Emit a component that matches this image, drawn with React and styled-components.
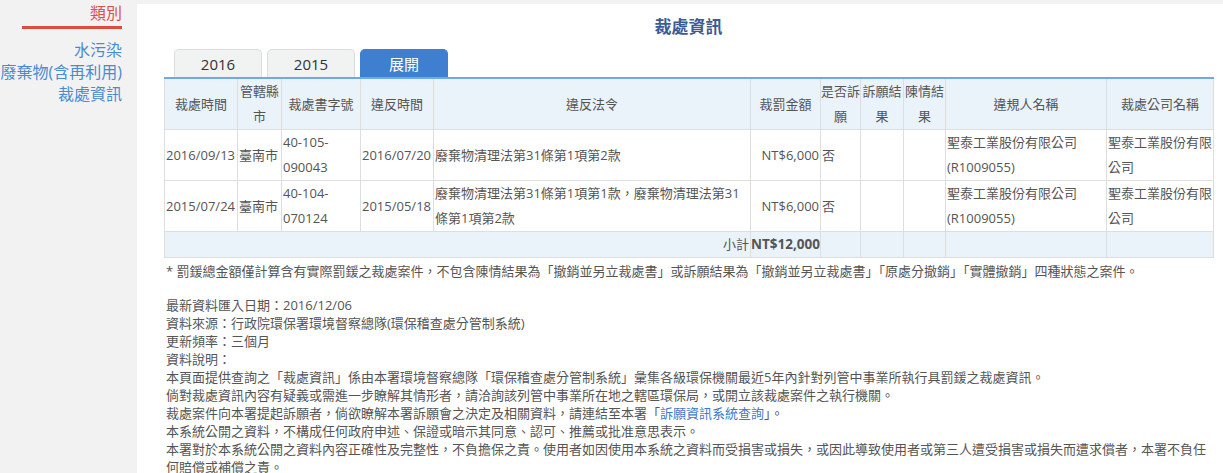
import React from "react";
import styled, { createGlobalStyle } from "styled-components";

const GlobalStyle = createGlobalStyle`
  html, body {
    margin: 0;
    padding: 0;
    background: #f2f2f2;
    font-family: "Open Sans", "Noto Sans CJK TC", sans-serif;
    color: #555;
  }
  * { box-sizing: border-box; }
`;

const Page = styled.div`
  display: flex;
  align-items: flex-start;
  width: 1223px;
  min-height: 473px;
  overflow: hidden;
`;

const Sidebar = styled.aside`
  flex: 0 0 137px;
  padding: 3px 15px 0 0;
  display: flex;
  flex-direction: column;
  align-items: flex-end;
  font-size: 16px;
`;

const SideHeading = styled.div`
  color: #de5147;
  line-height: 20px;
  white-space: nowrap;
`;

const SideBar = styled.div`
  width: 100px;
  height: 3px;
  margin-top: 3px;
  background: #e0493d;
`;

const SideList = styled.ul`
  list-style: none;
  margin: 10px 0 0;
  padding: 0;
  display: flex;
  flex-direction: column;
  align-items: flex-end;
`;

const SideItem = styled.li`
  color: #4a8ad4;
  line-height: 22px;
  white-space: nowrap;
`;

const Main = styled.main`
  flex: 1;
  margin-top: 4px;
  min-height: 469px;
  background: #fff;
  padding: 8px 10px 0 27px;
`;

const Title = styled.h1`
  margin: 0;
  width: 1049px;
  text-align: center;
  font-size: 17px;
  line-height: 30px;
  font-weight: bold;
  color: #3d5b95;
`;

const Tabs = styled.div`
  display: flex;
  gap: 5px;
  margin: 7px 0 0 10px;
`;

const Tab = styled.div`
  width: 88px;
  height: 28px;
  line-height: 29px;
  text-align: center;
  font-size: 15px;
  border: 1px solid ${(p) => (p.$active ? "#3f7fd0" : "#dcdcdc")};
  border-bottom: none;
  border-radius: 5px 5px 0 0;
  background: ${(p) => (p.$active ? "#3f7fd0" : "#f1f2f2")};
  color: ${(p) => (p.$active ? "#fff" : "#333")};
`;

const Table = styled.table`
  width: 1049px;
  table-layout: fixed;
  border-collapse: collapse;
  border-top: 2px solid #6ea9ec;
  font-size: 13px;
  line-height: 25px;
  color: #555;
`;

const HeadCell = styled.th`
  font-weight: normal;
  background: #eaf2fa;
  border: 1px solid #dedede;
  border-top: none;
  padding: 0;
  height: 50px;
  text-align: center;
  vertical-align: middle;
`;

const Cell = styled.td`
  border: 1px solid #dedede;
  padding: 0 1px;
  height: 51px;
  vertical-align: middle;
  text-align: ${(p) => (p.$right ? "right" : "left")};
  white-space: ${(p) => (p.$nowrap ? "nowrap" : "normal")};
`;

const TotalCell = styled.td`
  border: 1px solid #dedede;
  background: #eaf2fa;
  padding: 0 ${(p) => (p.$bold ? "0" : "1px")};
  height: 24px;
  text-align: right;
  font-size: ${(p) => (p.$bold ? "13.5px" : "13px")};
  font-weight: ${(p) => (p.$bold ? "bold" : "normal")};
  white-space: nowrap;
`;

const Notes = styled.div`
  width: 1045px;
  padding-left: 2px;
  font-size: 13px;
  line-height: 18px;
  color: #555;
`;

const Footnote = styled.p`
  margin: 4px 0 0;
`;

const InfoBlock = styled.div`
  margin-top: 16px;
`;

const Line = styled.div``;

const Link = styled.span`
  color: #3f7bc8;
`;

const columns = [73, 44, 79, 73, 317, 70, 40, 43, 42, 161, 107];

const headers = [
  "裁處時間",
  "管轄縣市",
  "裁處書字號",
  "違反時間",
  "違反法令",
  "裁罰金額",
  "是否訴願",
  "訴願結果",
  "陳情結果",
  "違規人名稱",
  "裁處公司名稱",
];

const records = [
  {
    date: "2016/09/13",
    city: "臺南市",
    doc: "40-105-090043",
    violated: "2016/07/20",
    law: "廢棄物清理法第31條第1項第2款",
    amount: "NT$6,000",
    appeal: "否",
    person: "聖泰工業股份有限公司(R1009055)",
    company: "聖泰工業股份有限公司",
  },
  {
    date: "2015/07/24",
    city: "臺南市",
    doc: "40-104-070124",
    violated: "2015/05/18",
    law: "廢棄物清理法第31條第1項第1款，廢棄物清理法第31條第1項第2款",
    amount: "NT$6,000",
    appeal: "否",
    person: "聖泰工業股份有限公司(R1009055)",
    company: "聖泰工業股份有限公司",
  },
];

export default function App() {
  return (
    <>
      <GlobalStyle />
      <Page>
        <Sidebar>
          <SideHeading>類別</SideHeading>
          <SideBar />
          <SideList>
            <SideItem>水污染</SideItem>
            <SideItem>廢棄物(含再利用)</SideItem>
            <SideItem>裁處資訊</SideItem>
          </SideList>
        </Sidebar>
        <Main>
          <Title>裁處資訊</Title>
          <Tabs>
            <Tab>2016</Tab>
            <Tab>2015</Tab>
            <Tab $active>展開</Tab>
          </Tabs>
          <Table>
            <colgroup>
              {columns.map((w, i) => (
                <col key={i} style={{ width: w }} />
              ))}
            </colgroup>
            <thead>
              <tr>
                {headers.map((h) => (
                  <HeadCell key={h}>{h}</HeadCell>
                ))}
              </tr>
            </thead>
            <tbody>
              {records.map((r) => (
                <tr key={r.doc}>
                  <Cell $nowrap>{r.date}</Cell>
                  <Cell>{r.city}</Cell>
                  <Cell>{r.doc}</Cell>
                  <Cell $nowrap>{r.violated}</Cell>
                  <Cell>{r.law}</Cell>
                  <Cell $right $nowrap>{r.amount}</Cell>
                  <Cell>{r.appeal}</Cell>
                  <Cell />
                  <Cell />
                  <Cell>{r.person}</Cell>
                  <Cell>{r.company}</Cell>
                </tr>
              ))}
              <tr>
                <TotalCell colSpan={5}>小計</TotalCell>
                <TotalCell $bold>NT$12,000</TotalCell>
                <TotalCell />
                <TotalCell />
                <TotalCell />
                <TotalCell />
                <TotalCell />
              </tr>
            </tbody>
          </Table>
          <Notes>
            <Footnote>
              * 罰鍰總金額僅計算含有實際罰鍰之裁處案件，不包含陳情結果為「撤銷並另立裁處書」或訴願結果為「撤銷並另立裁處書」「原處分撤銷」「實體撤銷」四種狀態之案件。
            </Footnote>
            <InfoBlock>
              <Line>最新資料匯入日期：2016/12/06</Line>
              <Line>資料來源：行政院環保署環境督察總隊(環保稽查處分管制系統)</Line>
              <Line>更新頻率：三個月</Line>
              <Line>資料說明：</Line>
              <Line>
                本頁面提供查詢之「裁處資訊」係由本署環境督察總隊「環保稽查處分管制系統」彙集各級環保機關最近5年內針對列管中事業所執行具罰鍰之裁處資訊。
              </Line>
              <Line>
                倘對裁處資訊內容有疑義或需進一步瞭解其情形者，請洽詢該列管中事業所在地之轄區環保局，或開立該裁處案件之執行機關。
              </Line>
              <Line>
                裁處案件向本署提起訴願者，倘欲瞭解本署訴願會之決定及相關資料，請連結至本署「<Link>訴願資訊系統查詢</Link>」。
              </Line>
              <Line>
                本系統公開之資料，不構成任何政府申述、保證或暗示其同意、認可、推薦或批准意思表示。
              </Line>
              <Line>
                本署對於本系統公開之資料內容正確性及完整性，不負擔保之責。使用者如因使用本系統之資料而受損害或損失，或因此導致使用者或第三人遭受損害或損失而遭求償者，本署不負任何賠償或補償之責。
              </Line>
            </InfoBlock>
          </Notes>
        </Main>
      </Page>
    </>
  );
}
